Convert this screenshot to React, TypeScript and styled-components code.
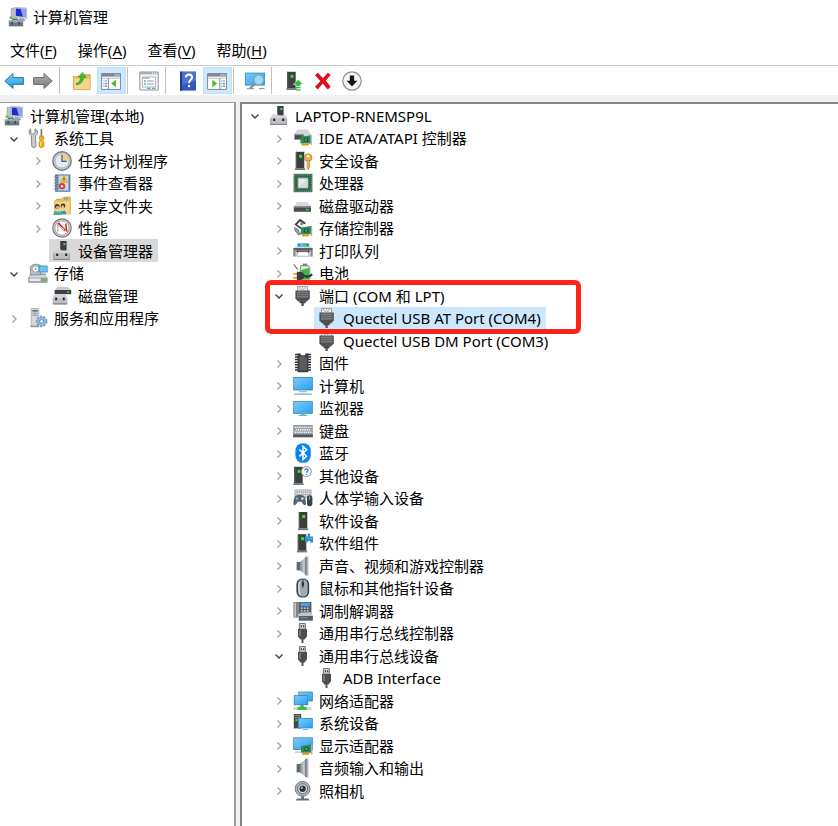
import React from "react";
import styled, { createGlobalStyle, css } from "styled-components";

const GlobalStyle = createGlobalStyle`
  html, body, #root { height: 100%; margin: 0; }
  body {
    background: #fff;
    color: #000;
    font-family: "Noto Sans", "Noto Sans CJK SC", sans-serif;
    font-size: 15px;
    line-height: 22px;
  }
  * { box-sizing: border-box; }
`;

/* ---------- shared icon parts ---------- */

const Tower = ({ x = 0, y = 0 }: { x?: number; y?: number }) => (
  <g transform={`translate(${x} ${y})`}>
    <path d="M0 0h8.5v16.6H0z" fill="#3c3e40" />
    <path d="M0 0h1.2v16.6H0z" fill="#55585a" />
    <path d="M-.8 16.4h10.2v1.8H-.8z" fill="#77797b" />
    <path d="M3.3 3h3v3h-3z" fill="#2fe52f" />
  </g>
);

const Screen = ({ x, y, w, h }: { x: number; y: number; w: number; h: number }) => (
  <g>
    <rect x={x} y={y} width={w} height={h} fill="#3a86b8" />
    <rect x={x + 0.8} y={y + 0.8} width={w - 1.6} height={h - 1.6} fill="url(#screen)" />
  </g>
);

const Card = ({ x, y }: { x: number; y: number }) => (
  <g transform={`translate(${x} ${y})`}>
    <path d="M0 1.5 10.5 0v8.3H0z" fill="#2a8a5c" />
    <path d="M10 0h1.4v9.8H10z" fill="#a9b0b3" />
    <path d="M3.4 2.8h4.2v3.6H3.4z" fill="#155239" />
    <path d="M4.4 3.6h2v1.8h-2z" fill="#56b98a" />
    <path d="M1 8.3h7.4v2H1z" fill="#f5a211" />
    <path d="M2.8 8.3v2M4.8 8.3v2M6.8 8.3v2" stroke="#c97c06" strokeWidth=".5" />
  </g>
);

const Disk = ({ y }: { y: number }) => (
  <g transform={`translate(0 ${y})`}>
    <path d="M4 0h10.5L18 4.6H.8z" fill="#d6d9db" />
    <path d="M.8 4.4H18v5.4H.8z" fill="#4a4d50" />
    <path d="M.8 4.4H18v1.2H.8z" fill="#8a8e91" />
    <path d="M13 6.8h2.6v1.6H13z" fill="#33e03a" />
  </g>
);

const Plug = () => (
  <>
    <path d="M4.6.4h10v5h-10z" fill="#f3f3f3" stroke="#8b8b8b" strokeWidth=".8" />
    <path d="M6.2 2h1M8.9 2h1M11.6 2h1M7.5 3.5h1M10.3 3.5h1" stroke="#777" />
    <path d="M2.4 4.6h14.4v8L14 15.4H5.2l-2.8-2.8z" fill="#4f5153" />
    <path d="M4 5.6h11.2v6H4z" fill="#7c7e80" />
    <path d="M4.4 7.6h10.4M4.4 9.6h10.4" stroke="#555759" strokeWidth=".9" />
    <path d="M6.6 15.2h6v2h-6z" fill="#3d3f41" />
    <path d="M8.4 17h2.4v3H8.4z" fill="#555" />
  </>
);

const Usb = () => (
  <>
    <path d="M6.4.5h6v5.7h-6z" fill="#d0d0d0" stroke="#6a6a6a" strokeWidth=".9" />
    <path d="M7.8 2.3h1.1v2H7.8zM10.1 2.3h1.1v2h-1.1z" fill="#333" />
    <path d="M5 6h9v7.2l-2.4 3.2H7.4L5 13.2z" fill="#4c4e50" />
    <path d="M6 7h2v6H6z" fill="#757779" />
    <path d="M8.5 16h2v4h-2z" fill="#555" />
  </>
);

const Speaker = () => (
  <>
    <path d="M3.6 6h3.6v8.4H3.6z" fill="#5b6c78" />
    <path d="M7 6 13.6.4v19L7 14.4z" fill="url(#metal)" />
    <path d="M13 .8v18.4" stroke="#69737b" strokeWidth="1.4" />
    <path d="M14.6.4v19.2" stroke="#b2b8bd" strokeWidth="1.6" />
  </>
);

const Management = () => (
  <>
    <path d="M3.2 1.4h5.3v10.5H3.2z" fill="#bfc4c9" stroke="#808890" strokeWidth=".6" />
    <path d="M1.6 9.4h3v2.4h-3z" fill="#55c83e" />
    <path d="M6.4.3 18.6 1v10.6L6.4 10z" fill="#cfd6de" stroke="#929da8" strokeWidth=".5" />
    <path d="m7.8 1.6 9.6.5v8l-9.6-1z" fill="#1a2fc8" />
    <path d="m12.5 1.8 4.9.3v8l-2.5-.3z" fill="#8aa6f3" />
    <path d="m11 11 4.6.5 2.2 2.7-6.8-.7z" fill="#9aa4ae" />
    <path d="M4.8 14v-1.6h5V14" fill="none" stroke="#60717e" strokeWidth="1.2" />
    <path d="M.8 13.6h14.4v5.8H.8z" fill="#687884" />
    <path d="M.8 13.6h14.4v2H.8z" fill="#93a3ae" />
    <path d="M3.4 15h1.6v2.4H3.4zM10.4 15H12v2.4h-1.6z" fill="#36444e" />
  </>
);

const DeviceManager = () => (
  <>
    <path d="M8.2 0h6.4v9.5H8.2z" fill="#3d4042" />
    <path d="M11.4 2h2v2.2h-2z" fill="#35de35" />
    <path d="M3.2 8.6h6v1.2h5.6v-1.2h1.400l1.600 4V19H1.400v-6.400z" fill="#d2d3d6" />
    <path d="M1.400 12.400h16.400V19H1.400z" fill="#bdbfc3" />
    <path d="M1.800 12.400V19M17.400 12.400V19" stroke="#96989c" strokeWidth=".8" />
    <path d="M1.400 17.800h16.400V19H1.400z" fill="#85878b" />
    <path d="M4.200 12.600h2V15h-2zM13.200 12.600h2V15h-2z" fill="#222" />
  </>
);

const PaneFrame = () => (
  <>
    <path d="M.6 2.600h19v15.800H.6z" fill="#fff" stroke="#7f8790" />
    <path d="M.6 2.600h19v3H.6z" fill="#7f8995" />
    <path d="M1 7.200h18.200" stroke="#bac2ca" />
    <path d="M13.600 4h1.200M15.600 4h1.200M17.600 4h1.200" stroke="#fff" strokeWidth="1.200" />
  </>
);

const icons = {
  management: <Management />,
  deviceManager: <DeviceManager />,
  tools: (
    <>
      <path d="M2.7.8v3.700l2.200 1.700 2.200-1.700V.8c2 .9 2.800 2.700 2.200 4.500-.3 1.100-1 1.800-1.800 2.300L8 18.300c0 1.600-4.200 1.600-4.200 0l-.5-10.700C.7 6.200.2 2.400 2.700.8z" fill="#c9cdd1" stroke="#777e84" strokeWidth=".9" />
      <path d="M13.400 1v7.800" stroke="#70787e" strokeWidth="1.600" />
      <path d="M11.600 8.200h4l.2 3-1 1.200 1.200 2v4c0 1.400-5 1.400-5 0v-4l1.200-2-1-1.200z" fill="#f4ae1d" stroke="#b97a09" strokeWidth=".6" />
      <path d="M12.600 14v4" stroke="#ffe08a" />
    </>
  ),
  clock: (
    <>
      <circle cx="10" cy="10" r="9.200" fill="#cfd1d4" stroke="#777b7f" strokeWidth="1.400" />
      <circle cx="10" cy="10" r="7" fill="#e2eaf2" stroke="#9ca6ae" strokeWidth=".7" />
      <path d="M10 10V3a7 7 0 0 1 7 7z" fill="#f3cd8b" />
      <path d="M10 4v6.400h4.600" fill="none" stroke="#4c6479" strokeWidth="1.300" />
    </>
  ),
  events: (
    <>
      <path d="M3 1.400h15.400v17.400H3z" fill="#5f7cab" />
      <path d="M3.800 2h13.200v16H3.800z" fill="#8fa9cf" />
      <path d="M7 3h9v14H7z" fill="#cbd8ea" />
      <path d="M5 2v16" stroke="#4c5f86" strokeWidth="1.600" strokeDasharray="1.200 1" />
      <path d="M1.800 4h3M1.800 7h3M1.800 10h3M1.800 13h3M1.800 16h3" stroke="#7c8289" strokeWidth=".9" />
      <path d="m12 2.800 3.800 6.400H8.300z" fill="#fbd126" stroke="#b98e09" strokeWidth=".5" />
      <path d="M12 4.800v2.400M12 7.800v.8" stroke="#222" strokeWidth=".9" />
      <circle cx="10" cy="13.200" r="3.200" fill="#dc3a3a" />
      <circle cx="10" cy="13.200" r="1.200" fill="#fff" />
    </>
  ),
  shared: (
    <>
      <path d="M5 3h5.400l1.400-2h6.600v17H2.600V5z" fill="#e8bd56" stroke="#c1953a" strokeWidth=".6" />
      <path d="M3 5.600h14.600V18H3z" fill="#f4d582" />
      <path d="M12 2h4v1.400h-4z" fill="#58a9db" />
      <circle cx="5.200" cy="10.400" r="2.400" fill="#493326" />
      <circle cx="5.600" cy="11.200" r="1.500" fill="#e7b48c" />
      <path d="M1.200 19c0-5.600 7.400-5.600 7.800 0z" fill="#44b48c" />
      <circle cx="11" cy="9.800" r="2.400" fill="#3c342c" />
      <circle cx="10.800" cy="10.800" r="1.500" fill="#e7b48c" />
      <path d="M8 18.200c.4-5.400 6-5.400 6.400 0z" fill="#3b8fc4" />
      <path d="m4.200 14.500 1.200 1.600 1-1.600M9.800 13.800l1.200 1.800 1-1.800" fill="#fff" />
    </>
  ),
  performance: (
    <>
      <circle cx="10" cy="10" r="9.200" fill="#ddd" stroke="#777" strokeWidth="1.200" />
      <circle cx="10" cy="10" r="7.200" fill="#fff" stroke="#888" strokeWidth=".8" />
      <path d="M5.800 13.800V6.200l6.500 7.200 1.700-7.800" fill="none" stroke="#7a8790" strokeWidth=".8" />
      <path d="m5.400 5.300 1.800-.9 6.600 7.600-.4-6 1-.4 1.400 9.200z" fill="#e21818" />
    </>
  ),
  storage: (
    <>
      <path d="M2.400 11.600h14l2.800 3.400v4.400H.6V15z" fill="#d9dce0" stroke="#82898e" strokeWidth=".6" />
      <path d="M.6 14.600h18.600v4.800H.6z" fill="#979ca2" />
      <path d="M1.600 15.400h11v2.800h-11z" fill="#e8eaed" />
      <path d="M14.200 15.400h3v2.400h-3z" fill="#60c72f" />
      <path d="M2.400 11.800V4.200C2.400 1.200 11 0 12.800 3v8.800z" fill="#b9c3c9" stroke="#74828a" strokeWidth=".8" />
      <ellipse cx="7.600" cy="6" rx="3.600" ry="3.200" fill="#eef3f5" stroke="#7b8b95" strokeWidth=".8" />
      <ellipse cx="7.600" cy="6" rx="1" ry=".8" fill="#687880" />
      <path d="M10.600 2.600h9v6.800h-9z" fill="#2b88bd" />
      <path d="M11.400 3.400h7.400v5.200h-7.400z" fill="#69c4f0" />
      <path d="M12 11h6" stroke="#6f8fa3" />
    </>
  ),
  diskManagement: (
    <>
      <path d="M5.600.8h10L19.200 4H2.600z" fill="#c9cbce" />
      <path d="M2.600 4h16.600v4.200H2.600z" fill="#3d4042" />
      <path d="M15 5.400h2.200v1.400H15z" fill="#36e033" />
      <path d="M2 8.800h12l1.200 3v6.600H.8v-6.600z" fill="#d2d3d6" />
      <path d="M.8 12h14.400v6.400H.8z" fill="#bdbfc3" />
      <path d="M.8 17.200h14.400v1.200H.8z" fill="#85878b" />
      <path d="M3.200 11.600h1.900v2.600H3.200zM10.800 11.600h1.900v2.600h-1.900z" fill="#222" />
    </>
  ),
  services: (
    <>
      <path d="M3.200.5h7.600v18H3.200z" fill="#d6dadd" stroke="#949da4" strokeWidth=".7" />
      <path d="M4.400 2h5.200v1.600H4.400z" fill="#447d72" />
      <path d="M4.400 5.200h5.200M4.400 7.200h5.200" stroke="#8a9298" />
      <path d="M2.400 17.600h8.400v1.600H2.400z" fill="#8b949b" />
      <circle cx="13.600" cy="13.400" r="4.800" fill="#a8c8e6" stroke="#7094b6" strokeWidth="2" strokeDasharray="2 1.400" />
      <circle cx="13.600" cy="13.400" r="4" fill="#93b8dc" />
      <circle cx="13.600" cy="13.400" r="1.800" fill="#fff" stroke="#5983aa" strokeWidth=".9" />
    </>
  ),
  ide: (
    <>
      <path d="M4.600 1.600h9.600l4 4.400v6H1V6z" fill="#d3d6d9" />
      <path d="M1.600 6h9v5.400h-9z" fill="#4a4d50" />
      <path d="M1.600 6H11v1.200H1.600z" fill="#919699" />
      <Card x={7.4} y={7.2} />
    </>
  ),
  security: (
    <>
      <Tower x={2.8} y={0.8} />
      <circle cx="15.200" cy="6.600" r="3.800" fill="#e6b45c" stroke="#a97a2a" strokeWidth=".7" />
      <circle cx="15.200" cy="5.200" r="1.100" fill="#fff" />
      <path d="M14 10h2.600v6.600l-1.300 2-1.300-1.400z" fill="#d9a044" stroke="#9d6f23" strokeWidth=".5" />
      <path d="M15 10v7" stroke="#f8dca0" strokeWidth=".7" />
    </>
  ),
  cpu: (
    <>
      <path d="M.6.8h18.800v18.400H.6z" fill="#2d6a4d" />
      <path d="M1.600 1.800h16.800v16.400H1.600z" fill="none" stroke="#d7c778" strokeWidth=".8" strokeDasharray=".8 1.300" />
      <path d="M4.400 4.400h11.200v11.200H4.400z" fill="#7d8f84" />
      <path d="M5.400 5.400h9.200v9.200H5.400z" fill="#e8eaea" />
      <path d="m5.400 14.600 9.200-9.200v9.200z" fill="#d6d9da" />
    </>
  ),
  disk: <Disk y={6} />,
  storageController: (
    <>
      <path d="m7 .8 6 4.200-1.600 1.200L7 3.400l-3 3 4.600 3.200L7.400 11l-6-4.600z" fill="#444" />
      <path d="M7.400 4.800h2.400v2.400H7.400z" fill="#777" />
      <path d="m1.400 9.600 3 1.200 3.400 5.400-2.200.8L2 13z" fill="#9b9fa2" stroke="#555" strokeWidth=".6" />
      <Card x={7.8} y={8} />
    </>
  ),
  printer: (
    <>
      <path d="M4.400 2.400h11.800v4H4.400z" fill="#288fd7" />
      <path d="M7.400 2.400h2.800v3H7.400z" fill="#65c3f4" />
      <path d="M10.200 2.400h3v3h-3z" fill="#54c95a" />
      <path d="M2 5.400h16l1.600 2v8H.4v-8z" fill="#d5d7d9" />
      <path d="M.4 7h19.200v2.600H.4z" fill="#5c6064" />
      <path d="M.4 9.600h2v6h-2zM17.600 9.600h2v6h-2z" fill="#84888c" />
      <path d="M3.600 9.800h12.800v1.600H3.600z" fill="#222" />
      <path d="M5 10.800h10l1 4.400H4z" fill="#fff" stroke="#888" strokeWidth=".5" />
    </>
  ),
  battery: (
    <>
      <path d="M9.800.6h4.400V3H9.800z" fill="#7d8286" />
      <path d="M7.800 2.600h7.600l1.400 2v11.600H7.400V4.600z" fill="#dfe9e1" stroke="#66706a" strokeWidth=".8" />
      <path d="m8.200 7 7.800-2v11H8.200z" fill="#35b943" />
      <path d="m.8 1.400 4 5.200" stroke="#777" strokeWidth="1.200" />
      <path d="M.2 10.800h4.400M.2 14.800h4.400" stroke="#e0ac27" strokeWidth="1.800" />
      <path d="M3.800 8.800h3.400c5.600.4 6 8 0 8.200H3.800z" fill="#393c3f" />
      <path d="M11 12.800c4 1.800 6 .6 8.200-1.600" fill="none" stroke="#333" strokeWidth="2.200" />
    </>
  ),
  plug: <Plug />,
  firmware: (
    <>
      <path d="M2 1.400h3.400M2 4h3.400M2 6.600h3.400M2 9.200h3.400M2 11.800h3.400M2 14.400h3.400M2 17h3.400M14.600 1.400H18M14.600 4H18M14.600 6.600H18M14.600 9.200H18M14.600 11.800H18M14.600 14.400H18M14.600 17H18" stroke="#2c2e30" strokeWidth="1.500" />
      <path d="M4.600.6h3.200v1.600h4.400V.6h3.200v18.600H4.600z" fill="#3d3f41" />
      <path d="M6.400 3.600h7.200v13.800H6.400z" fill="#5a5c5e" />
    </>
  ),
  computer: (
    <>
      <Screen x={0.2} y={1} w={19.6} h={13.4} />
      <path d="M6 15.200h8v1H6z" fill="#7eb4d4" />
      <path d="M2 17.200h16l1.600 1.800H.4z" fill="#a5bdcc" />
    </>
  ),
  monitor: (
    <>
      <Screen x={0.2} y={3.2} w={19.6} h={12.6} />
      <path d="M7.600 15.600h4.800v1.400h2v1H5.600v-1h2z" fill="#7eafca" />
    </>
  ),
  keyboard: (
    <>
      <path d="M.2 4h19.600v12.200H.2z" fill="#959da3" />
      <path d="M.2 13.600h19.600v2.600H.2z" fill="#4c5359" />
      <path d="M1.800 6.400h16.600M1.800 11.200h16.600" stroke="#f4f6f7" strokeWidth="1.400" strokeDasharray="1.500 .7" />
      <path d="M2.600 8.800h15" stroke="#f4f6f7" strokeWidth="1.400" strokeDasharray="1.500 .7" />
    </>
  ),
  bluetooth: (
    <>
      <rect x="2.400" y=".2" width="15.400" height="19.600" rx="7.400" fill="#0a84f5" />
      <path d="m6.400 6.600 7.200 6.600-3.600 3.400V3.400l3.600 3.400-7.200 6.600" fill="none" stroke="#fff" strokeWidth="1.500" />
    </>
  ),
  unknown: (
    <>
      <Tower x={1.2} y={0.8} />
      <circle cx="13.400" cy="5.600" r="5" fill="#f8f9fa" stroke="#8f969b" />
      <path d="M11.800 4.400c.2-2.400 3.800-1.800 3.200.2-.3.9-1.500 1-1.500 2.100M13.500 8v1" fill="none" stroke="#3280c3" strokeWidth="1.300" />
    </>
  ),
  hid: (
    <>
      <path d="M1.400 1.400h17.200v8.800H1.400z" fill="#a9b2b9" />
      <path d="M2.400 3h15.200M2.400 5.400h15.200M2.400 7.800h15.200" stroke="#f3f5f6" strokeWidth="1.200" strokeDasharray="1.400 .7" />
      <path d="M2 8.400c2.400-1.800 7-1.800 9.400 0 1.200 2.600 1.800 5.400 1.400 8.400-1.800 1.400-3.200-1-4-3H4.600c-.8 2-2.400 4.400-4 3-.6-3 .2-5.800 1.400-8.400z" fill="#556068" />
      <circle cx="4" cy="10.600" r="1.400" fill="#56b7ed" />
      <circle cx="9.400" cy="10.600" r="1.300" fill="#d7dee3" />
      <rect x="14" y="7.200" width="5.400" height="11" rx="2.600" fill="#39434b" />
      <path d="M16.600 8.600v3" stroke="#9ab" />
    </>
  ),
  softwareDevice: <Tower x={5.8} y={1} />,
  softwareComponent: (
    <>
      <Tower x={4.8} y={1.2} />
      <path d="M12 3.400h2.600V.6h2.600v2.800H20v6h-2.800V8h-2.400v1.400H12z" fill="#2f8fd0" />
      <path d="M14.600 5.400h1.200M17.400 5.400h1.200" stroke="#8cc8f0" />
    </>
  ),
  speaker: <Speaker />,
  mouse: (
    <>
      <rect x="3.400" y=".4" width="12.800" height="19.200" rx="5.800" fill="#3c4349" />
      <rect x="5" y="1.400" width="9.600" height="17.200" rx="4.600" fill="#9eaab5" />
      <path d="M6.600 3.800c-1 5-1 9 .6 13" fill="none" stroke="#d5dce2" strokeWidth="1.400" />
      <path d="M9.800 1v9" stroke="#4a5258" />
      <rect x="8.800" y="3.600" width="2.200" height="5" rx="1.100" fill="#2d3338" />
    </>
  ),
  modem: (
    <>
      <path d="M.4 1h5.200v15.600H.4z" fill="#7e8387" />
      <path d="M1.400 1.800h1.600v14H1.400z" fill="#c4c8cb" />
      <path d="M5.600 1h12.800v12H5.600z" fill="#54595d" />
      <path d="M7.600 1.600h9.200v3.600H7.600z" fill="#38a9ec" />
      <path d="M7.800 7.200h9M7.800 9.800h9" stroke="#dee2e5" strokeWidth="1.300" strokeDasharray="1.800 1.200" />
      <path d="m7 11.600 11-.4 1.800 3.400v5H5.800v-5z" fill="#c1c5c8" />
      <path d="M5.800 15h14v4.600h-14z" fill="#565b5f" />
      <path d="M8 16.600h7" stroke="#36c3ee" strokeWidth="1.200" strokeDasharray="1.400 1" />
    </>
  ),
  usb: <Usb />,
  network: (
    <>
      <Screen x={5.4} y={0.6} w={14.4} h={9.8} />
      <Screen x={0.8} y={4.2} w={14.4} h={10} />
      <path d="M7.400 14.200h3.200V16H7.400z" fill="#3ba646" />
      <path d="M.4 16.600h18.200v2.200H.4z" fill="#c6cbce" />
      <path d="M4.600 15.800h9v3.200h-9z" fill="#3dbb49" />
    </>
  ),
  system: (
    <>
      <path d="M.8 1h7.400v14.400H.8z" fill="#44484b" />
      <path d="M1.800 2.400h5.400M1.800 4.400h5.400" stroke="#9ba0a3" strokeWidth=".8" />
      <path d="M2.400 6h2v2h-2z" fill="#3ae13a" />
      <Screen x={5} y={5} w={14.8} h={10.4} />
      <path d="M9.600 16h5.600v1H9.600z" fill="#93b8cf" />
    </>
  ),
  display: (
    <>
      <Screen x={0.2} y={1.4} w={19.6} h={12.6} />
      <path d="M2 15.600h6v1H2z" fill="#93b8cf" />
      <Card x={8} y={8.4} />
    </>
  ),
  camera: (
    <>
      <circle cx="9.600" cy="7.800" r="7.400" fill="#b4b8bb" stroke="#73787b" />
      <circle cx="9.600" cy="7.800" r="5" fill="#dfe2e4" stroke="#5d6265" />
      <circle cx="9.600" cy="7.800" r="3.200" fill="#27323c" />
      <circle cx="8.800" cy="6.800" r="1.200" fill="#7fb4dc" />
      <path d="M8.200 15.200H11v2.200h4.400l1 2H2.800l1-2h4.400z" fill="#686d70" />
    </>
  ),
  back: (
    <path d="M.8 10 9 2.600v4h10.400v6.800H9v4z" fill="url(#blueArrow)" stroke="#2779b5" strokeLinejoin="round" />
  ),
  forward: (
    <path d="M19.200 10 11 2.600v4H.6v6.800H11v4z" fill="url(#grayArrow)" stroke="#686868" strokeLinejoin="round" />
  ),
  upFolder: (
    <>
      <path d="M1.400 5.400h7.200l1.600-1.800h8v15H1.400z" fill="#e9c26a" stroke="#c89c42" strokeWidth=".7" />
      <path d="M2.200 8h15.400v10H2.200z" fill="#f4d78d" />
      <path d="M4 12.600c3-.6 4.400-2.800 4.600-6L6 6l4.600-4.600 3.600 5-2.400-.2c-.4 4.400-3.200 7.400-7.800 7.600z" fill="#43bd2c" stroke="#2a8b1d" strokeWidth=".5" />
    </>
  ),
  showTree: (
    <>
      <PaneFrame />
      <path d="M7.400 7.600V18" stroke="#808992" />
      <path d="M2.400 10H6M2.400 12.600H6M2.400 15.200H6" stroke="#5687ba" strokeWidth="1.200" strokeDasharray="1 .6 2" />
      <path d="M15 8.800v7.400l-4.800-3.700z" fill="#4dbb2b" />
    </>
  ),
  properties: (
    <>
      <path d="M.8 1h18.400v18H.8z" fill="#f5f6f7" stroke="#9098a0" />
      <path d="M.8 1h18.400v2.400H.8z" fill="#a6adb3" />
      <path d="M13 2.200h1M15 2.200h1M17 2.200h1" stroke="#fff" />
      <path d="M3.400 6h13.200v10H3.400z" fill="#fff" stroke="#a6b0b8" strokeWidth=".9" />
      <path d="M3.400 6h7v2h-7z" fill="#b6bec5" />
      <path d="M5 10h1.600M5 13h1.600" stroke="#3f9ac7" strokeWidth="1.400" />
      <path d="M8 10h6.800M8 13h6.800" stroke="#8f999f" />
      <path d="M8 17.400h3.600" stroke="#24b8e8" strokeWidth="1.400" />
      <path d="M13 17.400h3.600" stroke="#90999f" strokeWidth="1.400" />
    </>
  ),
  help: (
    <>
      <path d="M2 .6h16v19H2z" fill="#3257bd" />
      <path d="M2 .6h2.200v19H2z" fill="#1f3b8f" />
      <path d="M4.200.6H18v9L4.200 14z" fill="#5f83dc" opacity=".6" />
      <path d="M7.800 6.400c.2-4.200 7-3.600 6.200.4-.5 2.200-3 2.400-3 5.400" fill="none" stroke="#fff" strokeWidth="2" />
      <path d="M9.900 14h2.200v2.200H9.900z" fill="#fff" />
    </>
  ),
  showActions: (
    <>
      <PaneFrame />
      <path d="M12.800 7.600V18" stroke="#808992" />
      <path d="M14.400 10H18M14.400 12.600H18M14.400 15.200H18" stroke="#5687ba" strokeWidth="1.200" strokeDasharray="1 .6 2" />
      <path d="M5.400 8.800v7.400l4.800-3.700z" fill="#4dbb2b" />
    </>
  ),
  scan: (
    <>
      <path d="M0 1.600h20v13H0z" fill="#3f9ccb" />
      <path d="M1 2.600h18v11H1z" fill="url(#screen)" />
      <path d="M2 17.600h7" stroke="#7ea5bd" strokeWidth="1.200" />
      <path d="m10.600 12.400-5.800 5.200" stroke="#8a9298" strokeWidth="2.200" />
      <circle cx="13.800" cy="8.800" r="5" fill="#b5e2f8" fillOpacity=".8" stroke="#75a7c0" strokeWidth="1.300" />
      <path d="M14 17.600h5.600" stroke="#86a5b7" strokeWidth="1.200" />
    </>
  ),
  updateDriver: (
    <>
      <Tower x={3.2} y={0.8} />
      <path d="m14.200 8.400 5 5.200h-2.800v2h-4.400v-2H9.200z" fill="#31bd39" stroke="#fff" strokeWidth=".5" />
      <path d="M11.800 16.600h4.800M11.800 18.800h4.800" stroke="#31bd39" strokeWidth="1.200" />
    </>
  ),
  uninstall: (
    <path d="m2 4.200 2.800-2.400L10 7.200l4.800-5.400 2.800 2-4.800 6 4.800 6-2.800 2.600-5-5.800-5.200 5.800L2 15.800 7.400 10z" fill="#e00b1c" />
  ),
  disable: (
    <>
      <circle cx="10" cy="10" r="9.200" fill="#f7f7f7" stroke="#8b8b8b" strokeWidth="1.200" />
      <path d="M7.800 4.600h4.400v5.200h3.200L10 15.600 4.600 9.800h3.200z" fill="#151515" />
    </>
  ),
};

type IconName = keyof typeof icons;

const IconSvg = styled.svg`
  display: block;
  flex: none;
  width: 20px;
  height: 20px;
`;

const Icon = ({ name }: { name: IconName }) => (
  <IconSvg viewBox="0 0 20 20" aria-hidden="true">
    {icons[name]}
  </IconSvg>
);

const GradientSvg = styled.svg`
  display: block;
  width: 0;
  height: 0;
`;

const Gradients = () => (
  <GradientSvg aria-hidden="true">
    <defs>
      <linearGradient id="screen" x1="0" y1="0" x2="1" y2="1">
        <stop offset="0" stopColor="#7cc8f8" />
        <stop offset="1" stopColor="#2ba2f0" />
      </linearGradient>
      <linearGradient id="metal" x1="0" y1="0" x2="1" y2="0">
        <stop offset="0" stopColor="#7b858d" />
        <stop offset=".6" stopColor="#c8ced3" />
        <stop offset="1" stopColor="#828b93" />
      </linearGradient>
      <linearGradient id="blueArrow" x1="0" y1="0" x2="0" y2="1">
        <stop offset="0" stopColor="#7fd1f7" />
        <stop offset="1" stopColor="#1b91de" />
      </linearGradient>
      <linearGradient id="grayArrow" x1="0" y1="0" x2="0" y2="1">
        <stop offset="0" stopColor="#b0b0b0" />
        <stop offset="1" stopColor="#7b7b7b" />
      </linearGradient>
    </defs>
  </GradientSvg>
);

/* ---------- window frame ---------- */

const Window = styled.div`
  display: flex;
  flex-direction: column;
  min-height: 100%;
  background: #f0f0f0;
`;

const TitleBar = styled.header`
  display: flex;
  align-items: center;
  gap: 5px;
  height: 34px;
  padding: 0 8px;
  background: #fff;
`;

const Title = styled.h1`
  margin: 0;
  font-size: 15px;
  font-weight: 400;
`;

const MenuBar = styled.nav`
  display: flex;
  gap: 21px;
  height: 31px;
  padding: 0 10px;
  background: #fff;
`;

const MenuButton = styled.button`
  padding: 0;
  border: 0;
  background: none;
  color: inherit;
  font: inherit;

  u {
    text-underline-offset: 2px;
  }
`;

const Toolbar = styled.div`
  display: flex;
  height: 30px;
  padding: 1px 0;
  border-top: 1px solid #c9cdd3;
  background: #fff;
`;

const ToolButton = styled.button`
  display: flex;
  align-items: center;
  flex: none;
  width: 29px;
  padding: 0 0 0 3px;
  border: 1px solid transparent;
  background: none;

  &[aria-pressed="true"] {
    border-color: #bfe0f8;
    background: #cce8ff;
  }
`;

const ToolSeparator = styled.span<{ $wide?: boolean }>`
  flex: none;
  width: 1px;
  margin: 0 ${(p) => (p.$wide ? 8 : 7)}px 0 1px;
  background: #c2c2c2;
`;

const Panels = styled.main`
  display: grid;
  grid-template-columns: 236px minmax(0, 1fr);
  gap: 4px;
  flex: 1;
  padding-top: 7px;
`;

const SidePanel = styled.nav`
  padding: 1px 0 0 4px;
  border: solid #9a9ea8;
  border-width: 1px 2px 0 0;
  background: #fff;
`;

const DevicePanel = styled.section`
  padding: 0 0 0 3px;
  border: solid #838383;
  border-width: 2px 0 0 2px;
  background: #fff;
`;

/* ---------- trees ---------- */

const Tree = styled.ul`
  position: relative;
  display: grid;
  grid-auto-rows: 23px 22px;
  margin: 0;
  padding: 0;
  list-style: none;
`;

const TreeRow = styled.li<{ $depth: number }>`
  display: flex;
  min-width: 0;
  padding-left: ${(p) => p.$depth * 24}px;
`;

const Toggle = styled.button`
  display: flex;
  align-items: center;
  justify-content: center;
  flex: none;
  width: 20px;
  padding: 1px 0 0;
  border: 0;
  background: none;
`;

const ToggleSpace = styled.span`
  flex: none;
  width: 20px;
`;

const ChevronSvg = styled.svg`
  width: 10px;
  height: 10px;
  fill: none;
`;

const Item = styled.span<{ $root?: boolean; $selected?: "active" | "inactive" }>`
  display: flex;
  align-items: center;
  gap: 6px;
  margin-left: ${(p) => (p.$root ? -3 : 1)}px;
  padding: 0 5px 0 3px;
  white-space: nowrap;
  ${(p) =>
    p.$selected &&
    css`
      background: ${p.$selected === "active" ? "#cce8ff" : "#d9d9d9"};
    `}
`;

const Marker = styled.li`
  position: absolute;
  top: 176px;
  left: 20px;
  width: 316px;
  height: 54px;
  border: 5px solid #fc2419;
  border-radius: 6px;
  pointer-events: none;
`;

interface Node {
  label: string;
  icon: IconName;
  depth: number;
  open?: boolean;
  root?: boolean;
  selected?: "active" | "inactive";
}

const consoleTree: Node[] = [
  { label: "计算机管理(本地)", icon: "management", depth: 0, root: true },
  { label: "系统工具", icon: "tools", depth: 0, open: true },
  { label: "任务计划程序", icon: "clock", depth: 1, open: false },
  { label: "事件查看器", icon: "events", depth: 1, open: false },
  { label: "共享文件夹", icon: "shared", depth: 1, open: false },
  { label: "性能", icon: "performance", depth: 1, open: false },
  { label: "设备管理器", icon: "deviceManager", depth: 1, selected: "inactive" },
  { label: "存储", icon: "storage", depth: 0, open: true },
  { label: "磁盘管理", icon: "diskManagement", depth: 1 },
  { label: "服务和应用程序", icon: "services", depth: 0, open: false },
];

const deviceTree: Node[] = [
  { label: "LAPTOP-RNEMSP9L", icon: "deviceManager", depth: 0, open: true },
  { label: "IDE ATA/ATAPI 控制器", icon: "ide", depth: 1, open: false },
  { label: "安全设备", icon: "security", depth: 1, open: false },
  { label: "处理器", icon: "cpu", depth: 1, open: false },
  { label: "磁盘驱动器", icon: "disk", depth: 1, open: false },
  { label: "存储控制器", icon: "storageController", depth: 1, open: false },
  { label: "打印队列", icon: "printer", depth: 1, open: false },
  { label: "电池", icon: "battery", depth: 1, open: false },
  { label: "端口 (COM 和 LPT)", icon: "plug", depth: 1, open: true },
  { label: "Quectel USB AT Port (COM4)", icon: "plug", depth: 2, selected: "active" },
  { label: "Quectel USB DM Port (COM3)", icon: "plug", depth: 2 },
  { label: "固件", icon: "firmware", depth: 1, open: false },
  { label: "计算机", icon: "computer", depth: 1, open: false },
  { label: "监视器", icon: "monitor", depth: 1, open: false },
  { label: "键盘", icon: "keyboard", depth: 1, open: false },
  { label: "蓝牙", icon: "bluetooth", depth: 1, open: false },
  { label: "其他设备", icon: "unknown", depth: 1, open: false },
  { label: "人体学输入设备", icon: "hid", depth: 1, open: false },
  { label: "软件设备", icon: "softwareDevice", depth: 1, open: false },
  { label: "软件组件", icon: "softwareComponent", depth: 1, open: false },
  { label: "声音、视频和游戏控制器", icon: "speaker", depth: 1, open: false },
  { label: "鼠标和其他指针设备", icon: "mouse", depth: 1, open: false },
  { label: "调制解调器", icon: "modem", depth: 1, open: false },
  { label: "通用串行总线控制器", icon: "usb", depth: 1, open: false },
  { label: "通用串行总线设备", icon: "usb", depth: 1, open: true },
  { label: "ADB Interface", icon: "usb", depth: 2 },
  { label: "网络适配器", icon: "network", depth: 1, open: false },
  { label: "系统设备", icon: "system", depth: 1, open: false },
  { label: "显示适配器", icon: "display", depth: 1, open: false },
  { label: "音频输入和输出", icon: "speaker", depth: 1, open: false },
  { label: "照相机", icon: "camera", depth: 1, open: false },
];

const TreeNode = ({ node }: { node: Node }) => (
  <TreeRow
    role="treeitem"
    aria-level={node.depth + 1}
    aria-expanded={node.open}
    aria-selected={Boolean(node.selected)}
    $depth={node.depth}
  >
    {node.open !== undefined && (
      <Toggle type="button" aria-label={node.label}>
        <ChevronSvg viewBox="0 0 10 10" aria-hidden="true">
          {node.open ? (
            <path d="M1.500 3.500 5 7l3.500-3.500" stroke="#404040" strokeWidth="1.400" />
          ) : (
            <path d="M3.500 1.500 7 5 3.500 8.500" stroke="#a0a0a0" strokeWidth="1.300" />
          )}
        </ChevronSvg>
      </Toggle>
    )}
    {node.open === undefined && !node.root && <ToggleSpace />}
    <Item $root={node.root} $selected={node.selected}>
      <Icon name={node.icon} />
      {node.label}
    </Item>
  </TreeRow>
);

const menus = [
  { label: "文件", accessKey: "F" },
  { label: "操作", accessKey: "A" },
  { label: "查看", accessKey: "V" },
  { label: "帮助", accessKey: "H" },
];

const Tool = ({ name, label, pressed }: { name: IconName; label: string; pressed?: boolean }) => (
  <ToolButton type="button" aria-label={label} aria-pressed={pressed}>
    <Icon name={name} />
  </ToolButton>
);

export default function App() {
  return (
    <Window>
      <GlobalStyle />
      <Gradients />
      <TitleBar>
        <Icon name="management" />
        <Title>计算机管理</Title>
      </TitleBar>
      <MenuBar>
        {menus.map((menu) => (
          <MenuButton key={menu.accessKey} type="button">
            {menu.label}(<u>{menu.accessKey}</u>)
          </MenuButton>
        ))}
      </MenuBar>
      <Toolbar role="toolbar">
        <Tool name="back" label="后退" />
        <Tool name="forward" label="前进" />
        <ToolSeparator $wide />
        <Tool name="upFolder" label="向上一级" />
        <Tool name="showTree" label="显示/隐藏控制台树" pressed />
        <ToolSeparator />
        <Tool name="properties" label="属性" />
        <ToolSeparator $wide />
        <Tool name="help" label="帮助" />
        <Tool name="showActions" label="显示/隐藏操作窗格" pressed />
        <ToolSeparator />
        <Tool name="scan" label="扫描检测硬件改动" />
        <ToolSeparator $wide />
        <Tool name="updateDriver" label="更新驱动程序" />
        <Tool name="uninstall" label="卸载设备" />
        <Tool name="disable" label="禁用设备" />
      </Toolbar>
      <Panels>
        <SidePanel>
          <Tree role="tree">
            {consoleTree.map((node) => (
              <TreeNode key={node.label} node={node} />
            ))}
          </Tree>
        </SidePanel>
        <DevicePanel>
          <Tree role="tree">
            {deviceTree.map((node) => (
              <TreeNode key={node.label} node={node} />
            ))}
            <Marker role="presentation" />
          </Tree>
        </DevicePanel>
      </Panels>
    </Window>
  );
}
